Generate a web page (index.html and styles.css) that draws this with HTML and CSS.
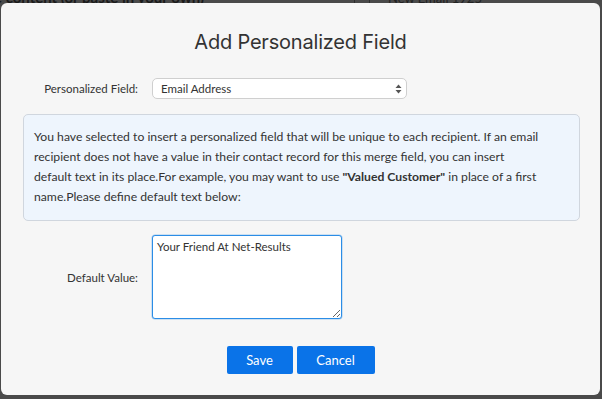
FILE: index.html
```html
<!DOCTYPE html>
<html lang="en">
<head>
    <meta charset="UTF-8">
    <title>Add Personalized Field</title>
    <link rel="stylesheet" href="styles.css">
</head>
<body>

<!-- page behind the overlay -->
<div class="page">
    <span class="page-hint">e content (or paste in your own)</span>
    <span class="page-col"></span>
    <span class="page-col"></span>
    <span class="page-name">New Email 1925</span>
</div>

<div class="modal">
    <h1>Add Personalized Field</h1>

    <div class="form-row">
        <label>Personalized Field:</label>
        <div class="select">
            <span>Email Address</span>
            <svg width="7" height="10" viewBox="0 0 7 10">
                <path d="M3.5 0.5 L6.5 4 L0.5 4 Z" fill="#555"/>
                <path d="M3.5 9.5 L6.5 6 L0.5 6 Z" fill="#555"/>
            </svg>
        </div>
    </div>

    <div class="info">
        You have selected to insert a personalized field that will be unique to each recipient. If an email<br>
        recipient does not have a value in their contact record for this merge field, you can insert<br>
        default text in its place.For example, you may want to use <b>"Valued Customer"</b> in place of a first<br>
        name.Please define default text below:
    </div>

    <div class="form-row value-row">
        <label>Default Value:</label>
        <textarea>Your Friend At Net-Results</textarea>
    </div>

    <div class="actions">
        <button class="btn">Save</button>
        <button class="btn">Cancel</button>
    </div>
</div>

</body>
</html>
```

FILE: styles.css
```css
body {
    margin: 0;
    background-color: #4a4a4a;
    font-family: 'Lato', 'Liberation Sans', sans-serif;
    color: #333;
    height: 399px;
    overflow: hidden;
}

.page {
    display: flex;
    align-items: flex-end;
    height: 4px;
    overflow: hidden;
    color: #1a1a1a;
    font-size: 15px;
}

.page-hint {
    margin-left: -6px;
    width: 360px;
    line-height: 13px;
    font-weight: 700;
    white-space: nowrap;
}

.page-col {
    width: 14px;
    height: 4px;
    border-left: 1px solid #2e2e2e;
}

.page-name {
    margin-left: 4px;
    font-size: 13px;
    line-height: 12px;
    color: #222;
}

.modal {
    position: absolute;
    left: 1px;
    top: 3px;
    width: 599px;
    height: 392px;
    box-sizing: border-box;
    background: #f6f6f6;
    border-radius: 6px;
    padding-top: 25px;
}

h1 {
    margin: 0 0 22px;
    text-align: center;
    font-family: 'Inter', sans-serif;
    font-weight: 400;
    font-size: 20px;
    line-height: 28px;
    color: #333;
    letter-spacing: -0.2px;
}

.form-row {
    display: grid;
    grid-template-columns: 137px auto;
    column-gap: 14px;
    align-items: center;
}

.form-row label {
    text-align: right;
    font-size: 11.5px;
    color: #333;
}

.select {
    width: 255px;
    height: 21px;
    box-sizing: border-box;
    display: flex;
    align-items: center;
    justify-content: space-between;
    padding: 0 4px 0 8px;
    background: #fff;
    border: 1px solid #cfcfcf;
    border-radius: 5px;
    font-size: 11.5px;
    color: #333;
}

.info {
    margin: 15px 20px 0 22px;
    padding: 12px 10px 13px 10px;
    background: #eef5fd;
    border: 1px solid #d0d6de;
    border-radius: 5px;
    font-size: 12.2px;
    line-height: 20px;
    color: #333;
    white-space: nowrap;
}

.info b {
    font-weight: 700;
}

.value-row {
    margin-top: 14px;
}

textarea {
    width: 190px;
    height: 84px;
    box-sizing: border-box;
    margin: 0;
    padding: 4px 4px;
    border: 1px solid #2b8de6;
    border-radius: 3px;
    box-shadow: 0 0 0 0.5px rgba(43, 141, 230, 0.4);
    font-family: 'Lato', 'Liberation Sans', sans-serif;
    font-size: 11.5px;
    color: #333;
    background: #fff;
}

.actions {
    display: flex;
    justify-content: center;
    gap: 4px;
    margin-top: 27px;
}

.btn {
    height: 28px;
    padding: 0 18px;
    background-color: #0a73e8;
    border: none;
    border-radius: 2px;
    color: #fff;
    font-family: 'Lato', 'Liberation Sans', sans-serif;
    font-size: 13px;
    cursor: pointer;
}

.btn:first-child {
    width: 66px;
}

.btn:last-child {
    width: 78px;
}
```
